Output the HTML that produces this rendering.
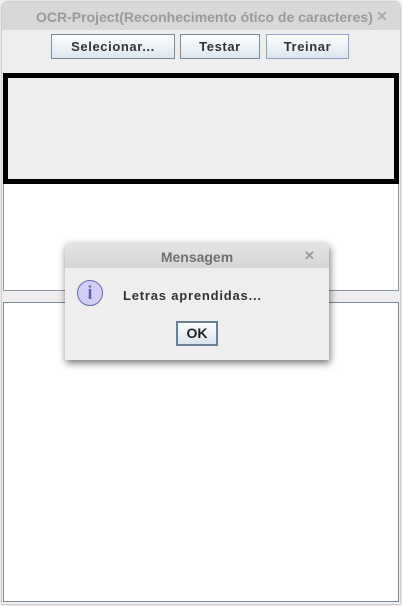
<!DOCTYPE html>
<html><head><style>
*{margin:0;padding:0;box-sizing:border-box}
body{width:402px;height:606px;background:#f2f2f2;font-family:"Liberation Sans",sans-serif;position:relative;overflow:hidden}
.abs{position:absolute}
.btn{position:absolute;top:34px;height:25px;border:1px solid #7a8a99;background:linear-gradient(#fdfeff,#dde6ef);font-size:13px;font-weight:bold;color:#333;text-align:center;line-height:23px;letter-spacing:0.6px}
</style></head><body>
<div class="abs" style="left:2px;top:2px;width:398px;height:602px;background:#eeeeee;border-radius:5px 5px 0 0;box-shadow:0 0 2px #888"></div>
<div class="abs" style="left:2px;top:2px;width:398px;height:28px;background:#d8d8d8;border-radius:5px 5px 0 0;"></div>
<div class="abs" style="left:36px;top:9px;font-weight:bold;font-size:14px;color:#9a9a9a;white-space:nowrap">OCR-Project(Reconhecimento ótico de caracteres)</div>
<div class="abs" style="left:376px;top:8px;font-size:14px;font-weight:bold;color:#aaa">✕</div>
<div class="btn" style="left:51px;width:124px">Selecionar...</div>
<div class="btn" style="left:180px;width:80px">Testar</div>
<div class="btn" style="left:266px;width:83px;border-color:#8aa4c2">Treinar</div>
<div class="abs" style="left:3px;top:73px;width:396px;height:111px;border:5px solid #000;background:#eeeeee"></div>
<div class="abs" style="left:3px;top:184px;width:396px;height:107px;background:#fff;border:1px solid #8a98a6;border-top:none"></div>
<div class="abs" style="left:3px;top:302px;width:396px;height:300px;background:#fff;border:1px solid #7d8b98"></div>
<div class="abs" style="left:65px;top:243px;width:264px;height:117px;background:#eeeeee;border-radius:4px 4px 0 0;box-shadow:1px 3px 8px rgba(0,0,0,0.55)"></div>
<div class="abs" style="left:65px;top:243px;width:264px;height:25px;background:linear-gradient(#e4e4e4,#d6d6d6);border-radius:4px 4px 0 0;font-weight:bold;font-size:14px;color:#707070;text-align:center;line-height:29px">Mensagem</div>
<div class="abs" style="left:304px;top:248px;font-size:13px;font-weight:bold;color:#999">✕</div>
<div class="abs" style="left:77px;top:280px;width:26px;height:26px;border-radius:50%;background:#cfcff7;border:1px solid #6a6ab0;color:#6060a8;font-weight:bold;font-size:18px;text-align:center;line-height:24px">i</div>
<div class="abs" style="left:123px;top:288px;font-size:13px;font-weight:bold;color:#333;letter-spacing:0.8px">Letras aprendidas...</div>
<div class="abs" style="left:176px;top:321px;width:42px;height:25px;border:2px solid #6b7f93;background:linear-gradient(#fbfdff,#dbe4ee);font-weight:bold;font-size:14px;color:#222;text-align:center;line-height:21px">OK</div>
</body></html>
